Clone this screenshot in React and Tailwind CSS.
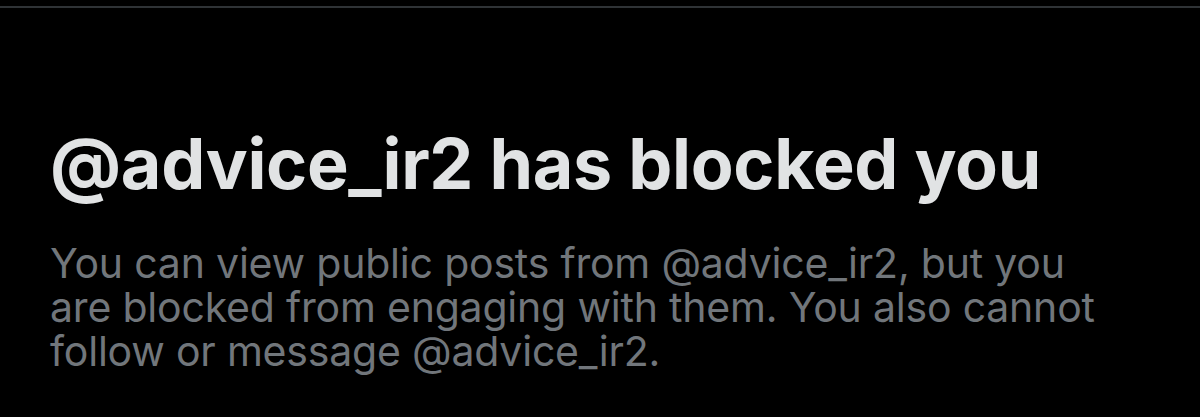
export default function App() {
  return (
    <div className="h-[417px] w-[1200px] overflow-hidden bg-black" style={{ fontFamily: 'Inter, "Noto Sans", sans-serif' }}>
      <div className="mt-[6px] h-[2px] bg-[#2f3336]" />
      <div className="px-[50px] pt-[114px]">
        <h1 className="text-[70px] font-bold leading-[84px] tracking-[-0.3px] text-[#e1e3e4]">
          @advice_ir2 has blocked you
        </h1>
        <p className="mt-[35px] max-w-[1070px] text-[41px] leading-[44px] tracking-[-0.2px] text-[#71767b]">
          You can view public posts from @advice_ir2, but you are blocked from engaging with them. You also cannot follow or message @advice_ir2.
        </p>
      </div>
    </div>
  )
}
